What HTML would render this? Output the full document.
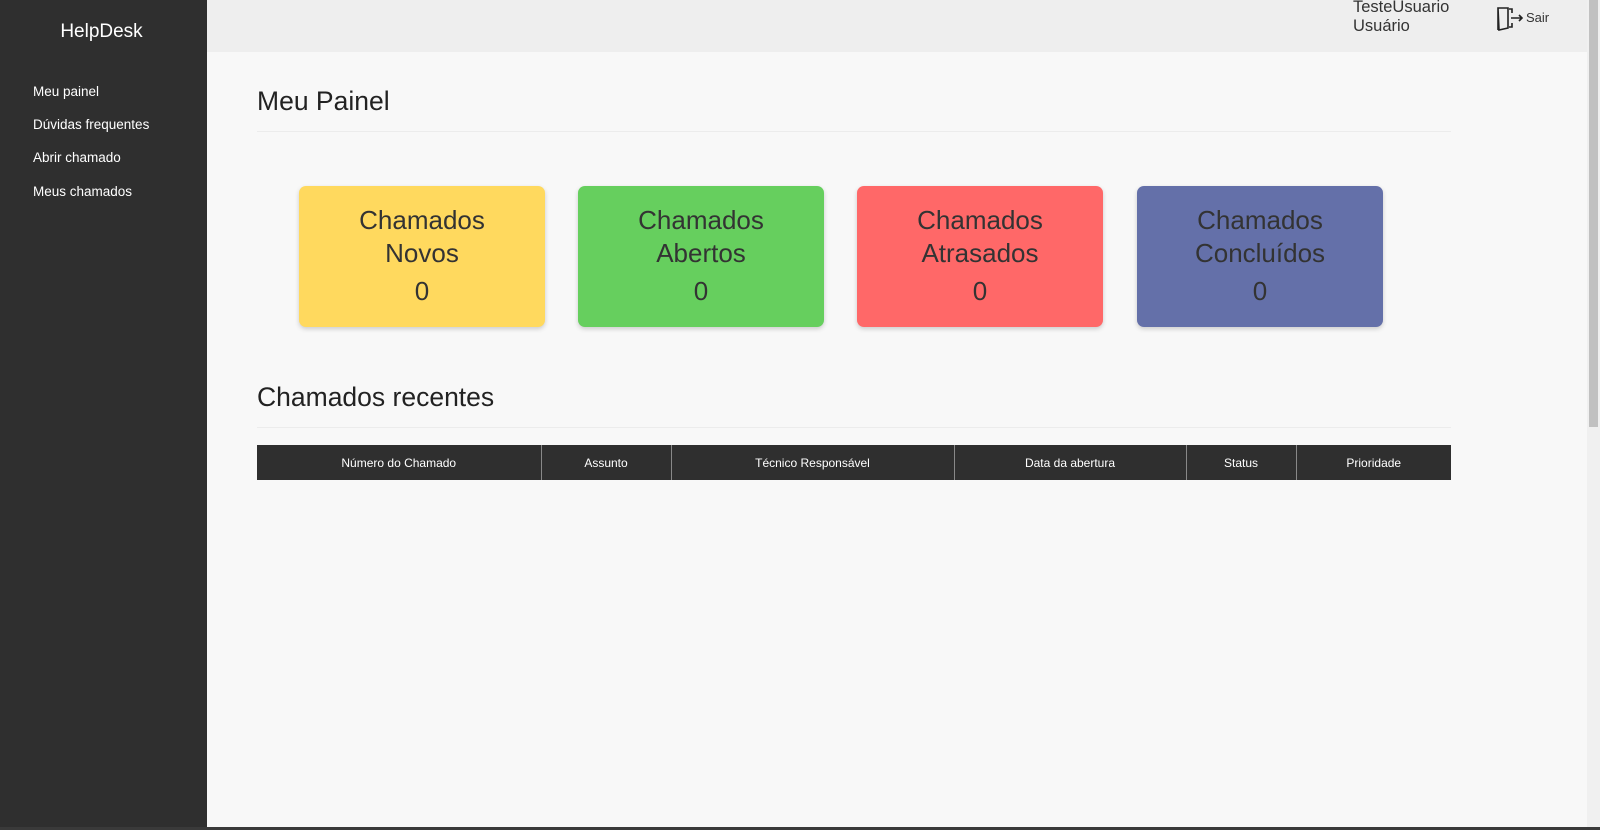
<!DOCTYPE html>
<html><head><meta charset="utf-8"><style>
*{margin:0;padding:0;box-sizing:border-box}
body{width:1600px;height:830px;overflow:hidden;background:#f8f8f8;font-family:"Liberation Sans",sans-serif;position:relative;color:#222}
.side{position:absolute;left:0;top:0;width:207px;height:830px;background:#2f2f2f;color:#fff}
.side h1{font-weight:normal;font-size:19px;position:absolute;top:21px;left:-2px;width:207px;text-align:center}
.side a{position:absolute;left:33px;font-size:13.5px;color:#fff}
.top{position:absolute;left:207px;top:0;width:1380px;height:52px;background:#eee}
.user{position:absolute;left:1353px;top:-2px;font-size:16.5px;line-height:19px;color:#333}
.sair{position:absolute;left:1496px;top:6px;font-size:13px;color:#333}
.sair span{position:absolute;left:30px;top:4px}
h2{position:absolute;left:257px;font-weight:normal;font-size:26.5px;color:#222}
.hr{position:absolute;left:257px;width:1194px;height:1px;background:#ececec}
.card{position:absolute;top:186px;width:246px;height:141px;border-radius:7px;box-shadow:0 2px 5px rgba(0,0,0,.18);text-align:center;font-size:26px;color:#333}
.card div{position:absolute;width:100%}
table{position:absolute;left:257px;top:445px;width:1194px;height:35px;border-collapse:collapse;background:#2f2f2f;color:#fff;font-size:12px}
th{font-weight:normal;border-right:1px solid #888}
th:last-child{border:none}
.sb{position:absolute;left:1587px;top:0;width:13px;height:830px;background:#f0f0f0}
.th{position:absolute;left:1589px;top:0;width:9px;height:427px;background:#c1c1c1}
.bot{position:absolute;left:0;top:827px;width:1600px;height:3px;background:#3a3a3a}
</style></head><body>
<div class="side"><h1>HelpDesk</h1>
<a style="top:84px">Meu painel</a><a style="top:117px">Dúvidas frequentes</a><a style="top:150px">Abrir chamado</a><a style="top:184px">Meus chamados</a></div>
<div class="top"></div>
<div class="user">TesteUsuario<br>Usuário</div>
<div class="sair"><svg width="30" height="26" viewBox="0 0 30 26" fill="none" stroke="#222" stroke-width="1.6"><path d="M2 2h10v20l-9 2z M2 2v22 M12 2v20"/><path d="M13 3h3v4 M16 17v4h-3"/><path d="M15 12h11 M23 9l3 3-3 3"/></svg><span>Sair</span></div>
<h2 style="top:86px">Meu Painel</h2><div class="hr" style="top:131px"></div>
<div class="card" style="left:299px;background:#ffd95e"><div style="top:19px">Chamados</div><div style="top:52px">Novos</div><div style="top:90px">0</div></div>
<div class="card" style="left:578px;background:#66cf5e"><div style="top:19px">Chamados</div><div style="top:52px">Abertos</div><div style="top:90px">0</div></div>
<div class="card" style="left:857px;background:#ff6868"><div style="top:19px">Chamados</div><div style="top:52px">Atrasados</div><div style="top:90px">0</div></div>
<div class="card" style="left:1137px;background:#6470a9"><div style="top:19px">Chamados</div><div style="top:52px">Concluídos</div><div style="top:90px">0</div></div>
<h2 style="top:382px">Chamados recentes</h2><div class="hr" style="top:427px"></div>
<table><tr><th style="width:284px">Número do Chamado</th><th style="width:130px">Assunto</th><th style="width:283px">Técnico Responsável</th><th style="width:232px">Data da abertura</th><th style="width:110px">Status</th><th>Prioridade</th></tr></table>
<div class="sb"></div><div class="th"></div><div class="bot"></div>
</body></html>
